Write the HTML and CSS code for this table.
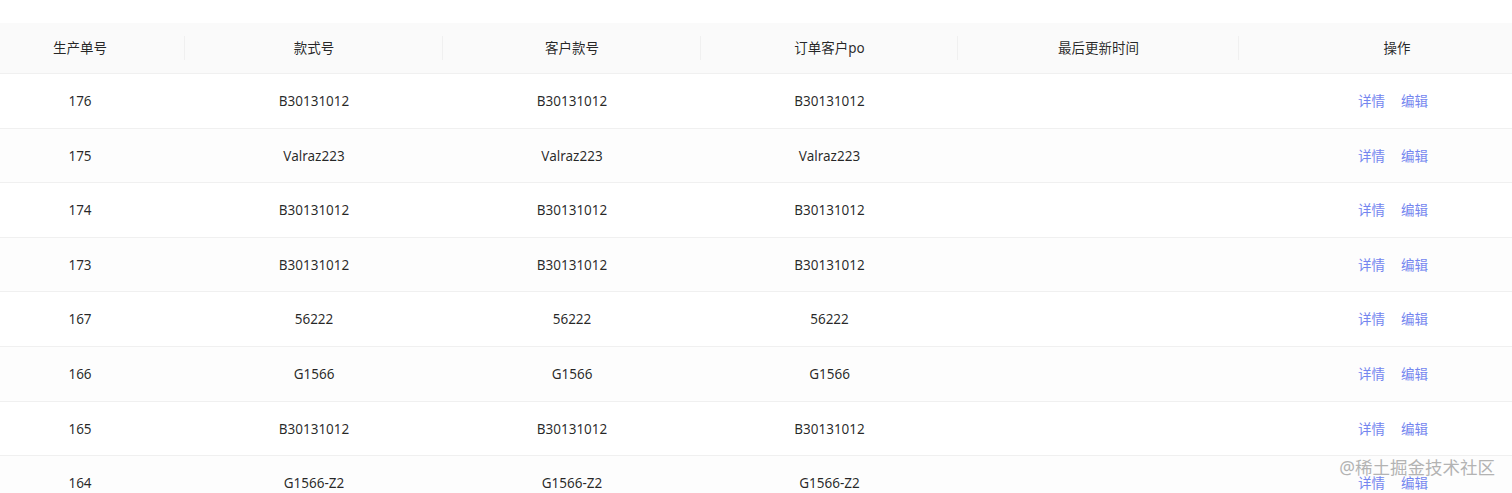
FILE: index.html
```html
<!DOCTYPE html>
<html lang="zh-CN">
<head>
<meta charset="utf-8">
<title>订单列表</title>
<link rel="stylesheet" href="styles.css">
</head>
<body>
<div class="page">
  <div class="table-wrap">
    <table class="table">
      <colgroup>
        <col class="c1"><col class="c2"><col class="c3"><col class="c4"><col class="c5"><col class="c6">
      </colgroup>
      <thead>
        <tr>
          <th>生产单号</th>
          <th>款式号</th>
          <th>客户款号</th>
          <th>订单客户po</th>
          <th>最后更新时间</th>
          <th class="last">操作</th>
        </tr>
      </thead>
      <tbody>
        <tr><td>176</td><td>B30131012</td><td>B30131012</td><td>B30131012</td><td></td><td><a class="link">详情</a><a class="link">编辑</a></td></tr>
        <tr><td>175</td><td>Valraz223</td><td>Valraz223</td><td>Valraz223</td><td></td><td><a class="link">详情</a><a class="link">编辑</a></td></tr>
        <tr><td>174</td><td>B30131012</td><td>B30131012</td><td>B30131012</td><td></td><td><a class="link">详情</a><a class="link">编辑</a></td></tr>
        <tr><td>173</td><td>B30131012</td><td>B30131012</td><td>B30131012</td><td></td><td><a class="link">详情</a><a class="link">编辑</a></td></tr>
        <tr><td>167</td><td>56222</td><td>56222</td><td>56222</td><td></td><td><a class="link">详情</a><a class="link">编辑</a></td></tr>
        <tr><td>166</td><td>G1566</td><td>G1566</td><td>G1566</td><td></td><td><a class="link">详情</a><a class="link">编辑</a></td></tr>
        <tr><td>165</td><td>B30131012</td><td>B30131012</td><td>B30131012</td><td></td><td><a class="link">详情</a><a class="link">编辑</a></td></tr>
        <tr><td>164</td><td>G1566-Z2</td><td>G1566-Z2</td><td>G1566-Z2</td><td></td><td><a class="link">详情</a><a class="link">编辑</a></td></tr>
      </tbody>
    </table>
  </div>
  <div class="watermark">@稀土掘金技术社区</div>
</div>
</body>
</html>
```
FILE: styles.css
```css
html, body {
  margin: 0;
  padding: 0;
  background: #ffffff;
  overflow: hidden;
}

body {
  font-family: "Noto Sans", "Noto Sans CJK SC", sans-serif;
  font-size: 13.5px;
  color: rgba(0, 0, 0, 0.85);
}

.page {
  position: relative;
  width: 1512px;
  height: 493px;
  overflow: hidden;
  padding-top: 23px;
  box-sizing: border-box;
}

.table-wrap {
  margin-left: -25px;
  width: 1580px;
}

.table {
  width: 1580px;
  table-layout: fixed;
  border-collapse: collapse;
  border-spacing: 0;
}

.c1 { width: 210px; }
.c2 { width: 258px; }
.c3 { width: 258px; }
.c4 { width: 257px; }
.c5 { width: 281px; }
.c6 { width: 316px; }

.table th {
  position: relative;
  background: #fafafa;
  font-weight: 400;
  color: rgba(0, 0, 0, 0.85);
  text-align: center;
  padding: 14px 16px;
  line-height: 22px;
  height: 22px;
  border-bottom: 1px solid #f0f0f0;
}

.table th::before {
  content: "";
  position: absolute;
  right: 0;
  top: 50%;
  width: 1px;
  height: 24px;
  transform: translateY(-50%);
  background: #f0f0f0;
}

.table th.last::before {
  display: none;
}

.table td {
  text-align: center;
  padding: 17px 16px 15px;
  line-height: 21.6px;
  height: 21.6px;
  border-bottom: 1px solid #f0f0f0;
  color: rgba(0, 0, 0, 0.85);
  white-space: nowrap;
}

.table tbody tr:nth-child(even) td {
  background: #fdfdfd;
}

.link {
  color: #7486ef;
  cursor: pointer;
  margin-right: 8px;
}

.link + .link {
  margin-left: 8px;
}

.watermark {
  position: absolute;
  right: 17px;
  bottom: 15px;
  font-size: 17.5px;
  line-height: 22px;
  color: #b3b3b3;
  text-shadow: 0 0 2px #ffffff, 0 0 2px #ffffff;
  letter-spacing: 0;
}
```
